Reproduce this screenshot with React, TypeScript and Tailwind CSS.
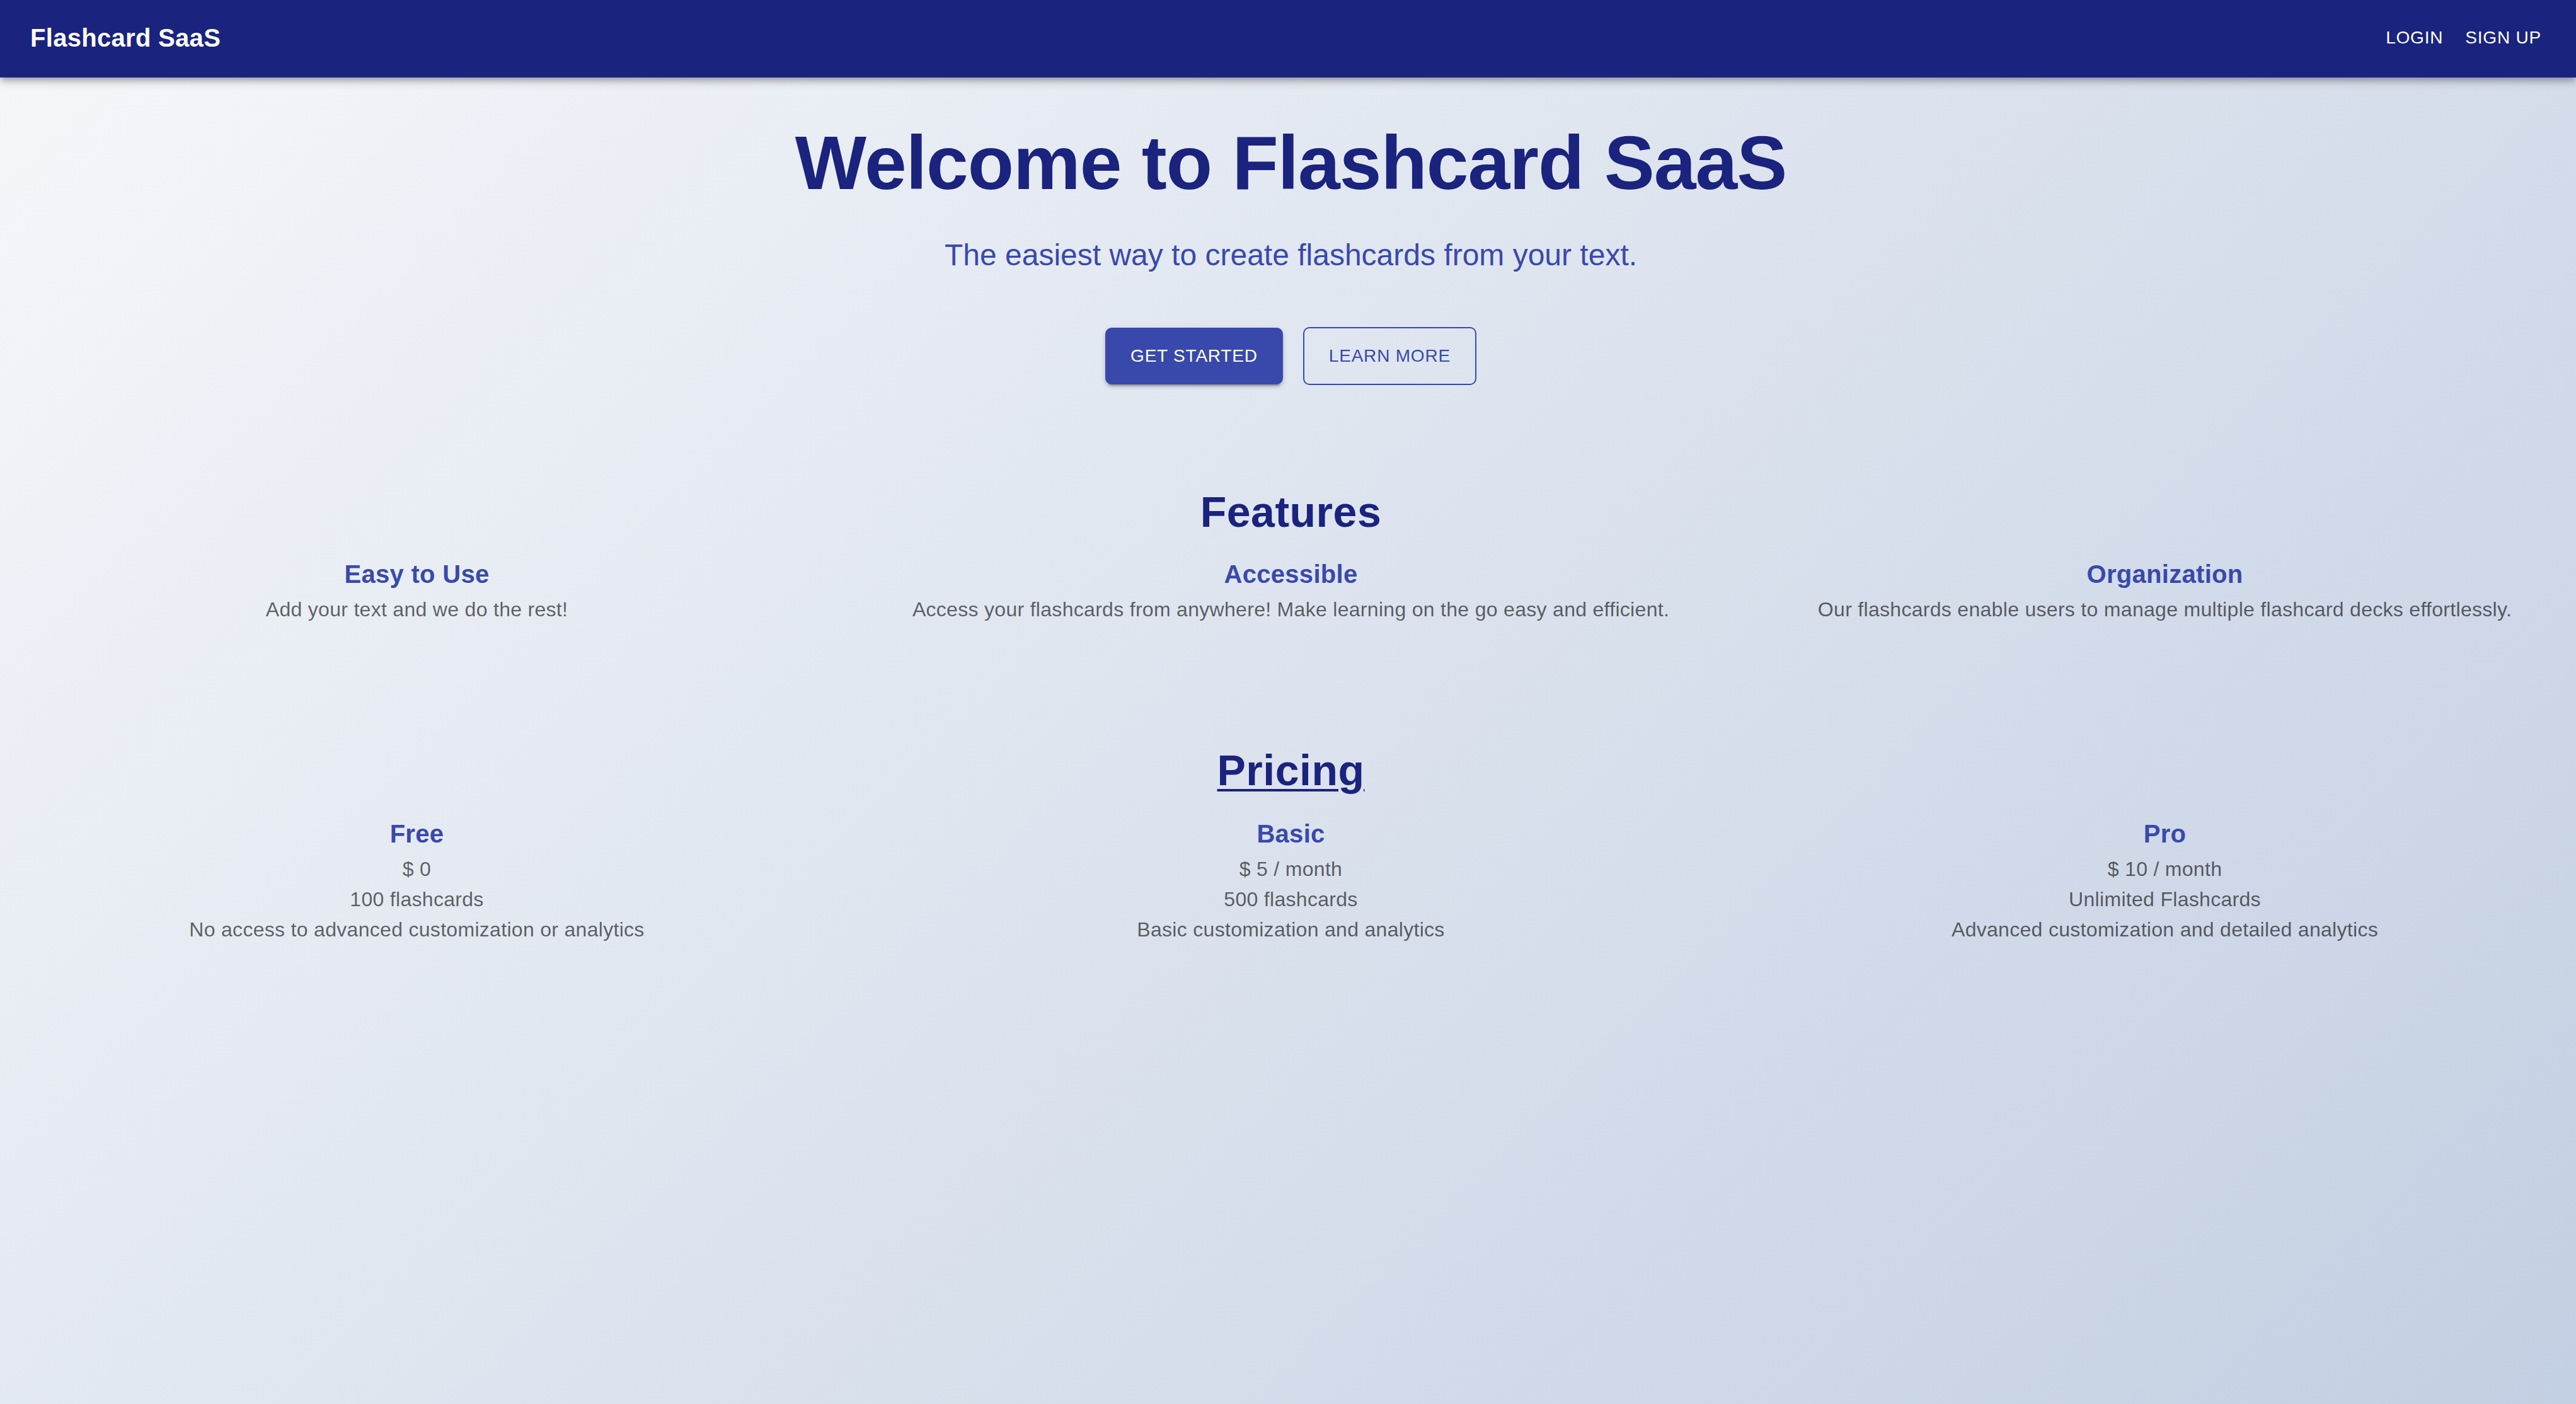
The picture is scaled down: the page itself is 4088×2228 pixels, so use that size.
import React from "react";

const features = [
  { title: "Easy to Use", desc: "Add your text and we do the rest!" },
  { title: "Accessible", desc: "Access your flashcards from anywhere! Make learning on the go easy and efficient." },
  { title: "Organization", desc: "Our flashcards enable users to manage multiple flashcard decks effortlessly." },
];

const plans = [
  { name: "Free", price: "$ 0", cards: "100 flashcards", extra: "No access to advanced customization or analytics" },
  { name: "Basic", price: "$ 5 / month", cards: "500 flashcards", extra: "Basic customization and analytics" },
  { name: "Pro", price: "$ 10 / month", cards: "Unlimited Flashcards", extra: "Advanced customization and detailed analytics" },
];

export default function App() {
  return (
    <div className="min-h-screen w-full bg-[linear-gradient(135deg,#f5f7fa_0%,#c3cfe2_100%)] font-['Liberation_Sans',Arial,Helvetica,sans-serif]">
      <header className="relative z-10 h-[123px] bg-[#1a237e] flex items-center justify-between pl-12 pr-[39px] pb-[3px] shadow-[0_4px_8px_-2px_rgba(0,0,0,0.2),0_8px_10px_0_rgba(0,0,0,0.14),0_2px_20px_0_rgba(0,0,0,0.12)]">
        <h6 className="text-white text-[40px] font-bold leading-[64px] tracking-[0.0075em]">Flashcard SaaS</h6>
        <nav className="flex items-center gap-[3px]">
          <button className="px-4 py-3 text-white text-[28px] font-medium uppercase tracking-[0.02857em] leading-[42px]">Login</button>
          <button className="px-4 py-3 text-white text-[28px] font-medium uppercase tracking-[0.02857em] leading-[42px]">Sign Up</button>
        </nav>
      </header>

      <main className="flex flex-col items-center text-center pl-[9px]">
        <h1 className="mt-[63px] text-[120px] leading-[144px] font-bold tracking-[-0.00833em] text-[#1a237e]">Welcome to Flashcard SaaS</h1>
        <p className="mt-[43px] text-[48px] leading-[64px] text-[#3949ab]">The easiest way to create flashcards from your text.</p>
        <div className="mt-[82px] flex items-center gap-[32px]">
          <button className="h-[90px] px-[40px] rounded-[10px] bg-[#3949ab] text-white text-[28px] font-medium uppercase tracking-[0.02857em] shadow-[0_6px_2px_-4px_rgba(0,0,0,0.2),0_4px_4px_0_rgba(0,0,0,0.14),0_2px_10px_0_rgba(0,0,0,0.12)]">
            Get Started
          </button>
          <button className="h-[92px] px-[39px] rounded-[10px] border-2 border-[#3949ab] text-[#3949ab] text-[28px] font-medium uppercase tracking-[0.02857em]">
            Learn More
          </button>
        </div>

        <h2 className="mt-[159px] text-[68px] leading-[84px] font-bold tracking-[0.00735em] text-[#1a237e]">Features</h2>
        <div className="mt-[25px] w-full grid grid-cols-3 gap-x-[82px]">
          {features.map((f) => (
            <div key={f.title} className="flex flex-col items-center">
              <h3 className="text-[40px] leading-[64px] font-bold tracking-[0.0075em] text-[#3949ab]">{f.title}</h3>
              <p className="text-[32px] leading-[48px] tracking-[0.00938em] text-black/60">{f.desc}</p>
            </div>
          ))}
        </div>

        <h2 className="mt-[189px] text-[68px] leading-[84px] font-bold tracking-[0.00735em] text-[#1a237e] underline decoration-[4px] underline-offset-[6px]">Pricing</h2>
        <div className="mt-[27px] w-full grid grid-cols-3 gap-x-[82px]">
          {plans.map((p) => (
            <div key={p.name} className="flex flex-col items-center">
              <h3 className="text-[40px] leading-[64px] font-bold tracking-[0.0075em] text-[#3949ab]">{p.name}</h3>
              <p className="text-[32px] leading-[48px] tracking-[0.00938em] text-black/60">{p.price}</p>
              <p className="text-[32px] leading-[48px] tracking-[0.00938em] text-black/60">{p.cards}</p>
              <p className="text-[32px] leading-[48px] tracking-[0.00938em] text-black/60">{p.extra}</p>
            </div>
          ))}
        </div>
      </main>
    </div>
  );
}
